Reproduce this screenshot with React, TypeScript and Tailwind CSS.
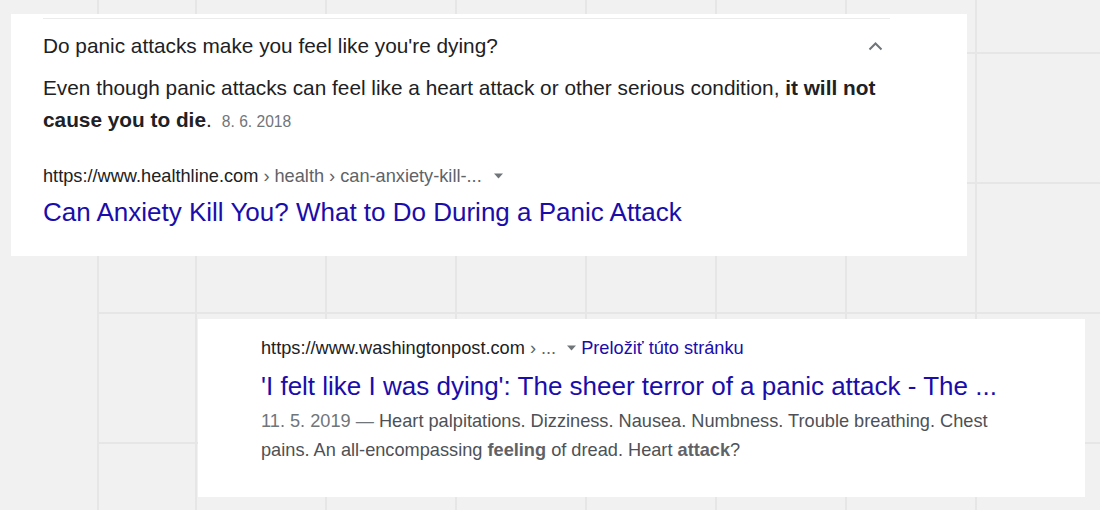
import React from "react";

const font = "font-['Liberation_Sans',Arial,sans-serif]";

const Caret = () => (
  <svg width="9" height="6" viewBox="0 0 9 6" className="inline-block">
    <path d="M0 0.5 L9 0.5 L4.5 5.5 Z" fill="#70757a" />
  </svg>
);

const ChevronUp = () => (
  <svg width="15" height="10" viewBox="0 0 15 10">
    <path d="M1.5 8.5 L7.5 2.5 L13.5 8.5" fill="none" stroke="#70757a" strokeWidth="2" />
  </svg>
);

const QuestionCard = () => {
  return (
    <div className="absolute left-[11px] top-[14px] w-[956px] h-[242px] bg-white pl-[32px]">
      <div className="w-[847px] mt-[4px] border-t border-[#ebebeb]">
        <div className="flex items-center justify-between h-[53px] pr-[7px]">
          <p className="text-[20.8px] text-[#202124]">Do panic attacks make you feel like you're dying?</p>
          <ChevronUp />
        </div>
        <p className="text-[20.8px] leading-[31.5px] text-[#202124]">
          Even though panic attacks can feel like a heart attack or other serious condition,{" "}
          <b>it will not</b> <b>cause you to die</b>.{" "}
          <span className="text-[15.6px] text-[#70757a]">&#160;8. 6. 2018</span>
        </p>
        <div className="mt-[27px] flex items-center text-[18.2px] leading-[24px]">
          <span className="text-[#202124]">https://www.healthline.com</span>
          <span className="text-[#5f6368]">&#160;› health › can-anxiety-kill-...</span>
          <span className="ml-[12px] flex items-center">
            <Caret />
          </span>
        </div>
        <p className="mt-[7px] text-[26px] leading-[34px] text-[#1a0dab]">
          Can Anxiety Kill You? What to Do During a Panic Attack
        </p>
      </div>
    </div>
  );
};

const ResultCard = () => {
  return (
    <div className="absolute left-[198px] top-[319px] w-[887px] h-[178px] bg-white pl-[63px] pt-[17px]">
      <div className="flex items-center text-[18.2px] leading-[24px]">
        <span className="text-[#202124]">https://www.washingtonpost.com</span>
        <span className="text-[#5f6368]">&#160;› ...</span>
        <span className="ml-[11px] mr-[5px] flex items-center">
          <Caret />
        </span>
        <span className="text-[#1a0dab]">Preložiť túto stránku</span>
      </div>
      <p className="mt-[9px] text-[26px] leading-[34px] text-[#1a0dab] whitespace-nowrap">
        'I felt like I was dying': The sheer terror of a panic attack - The ...
      </p>
      <div className="mt-[4px] w-[760px] text-[18.2px] leading-[28.6px] text-[#4d5156]">
        <p>
          <span className="text-[#70757a]">11. 5. 2019 — </span>
          <span>Heart palpitations. Dizziness. Nausea. Numbness. Trouble breathing. Chest</span>
        </p>
        <p>
          <span>pains. An all-encompassing </span>
          <b className="text-[#5f6368]">feeling</b>
          <span> of dread. Heart </span>
          <b className="text-[#5f6368]">attack</b>
          <span>?</span>
        </p>
      </div>
    </div>
  );
};

export default function App() {
  return (
    <div className={`relative w-[1100px] h-[510px] overflow-hidden bg-[#f1f1f1] ${font}`}>
      <div className="flex h-full">
        <div className="w-[97px] shrink-0" />
        <div className="flex-1 border-l-2 border-[#e6e6e6] bg-[linear-gradient(to_right,#e6e6e6_2px,transparent_2px),linear-gradient(to_bottom,#e6e6e6_2px,transparent_2px)] bg-[size:130px_130px] bg-[position:96px_52px]" />
      </div>
      <QuestionCard />
      <ResultCard />
    </div>
  );
}
